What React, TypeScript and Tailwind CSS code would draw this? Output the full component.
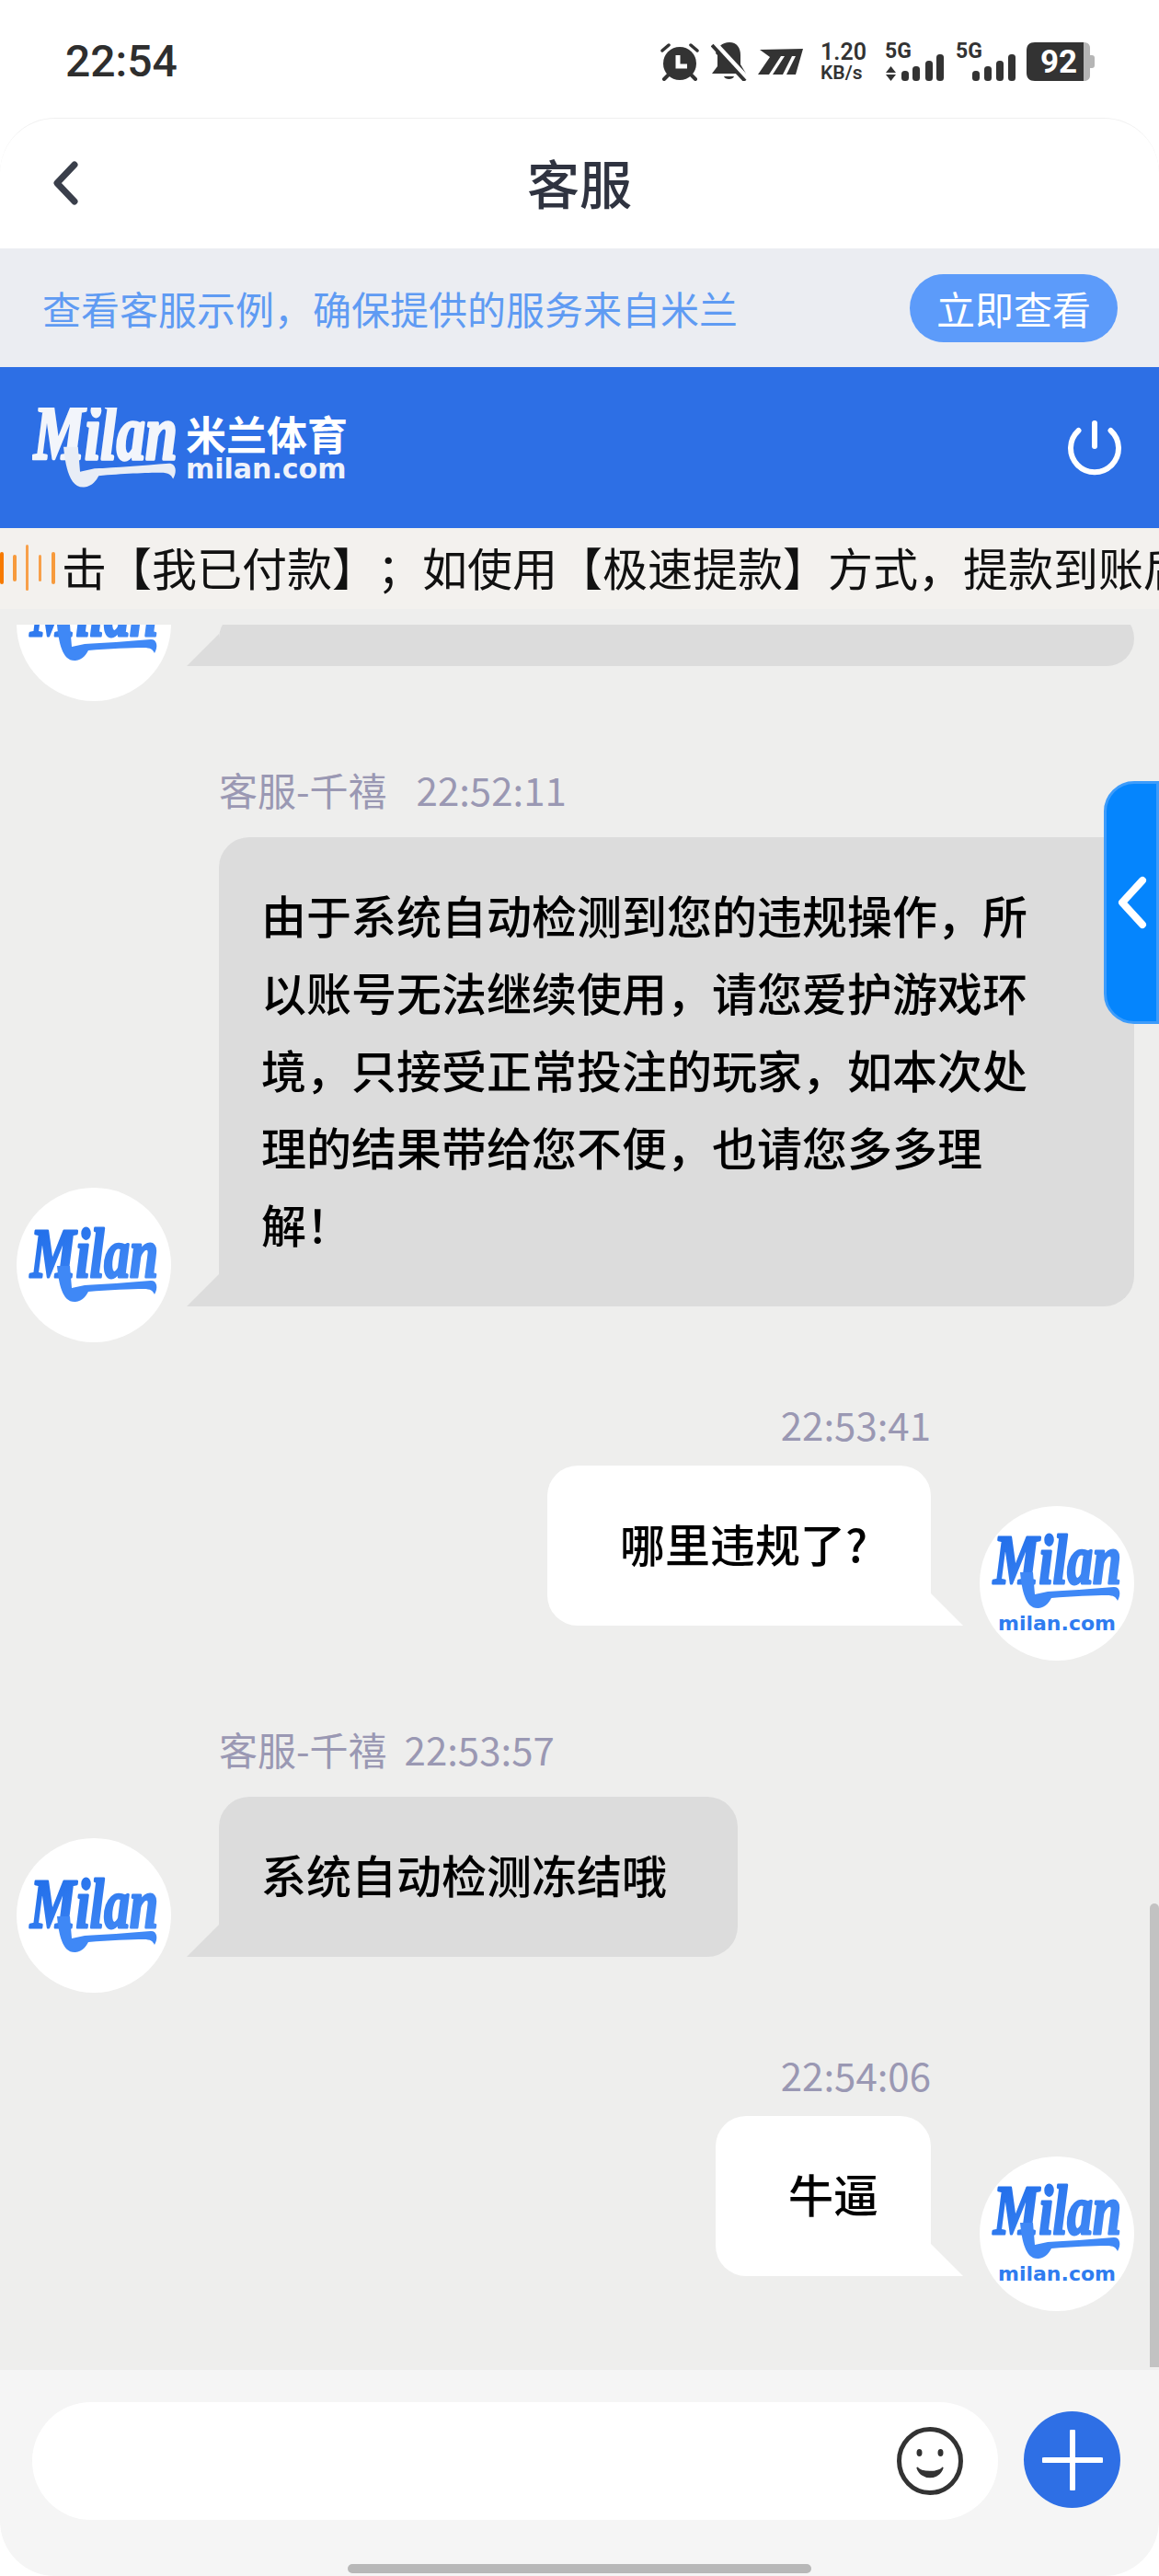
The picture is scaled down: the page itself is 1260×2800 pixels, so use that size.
const ink = '#333333';

function AlarmIcon() {
  return (
    <svg width="42" height="42" viewBox="0 0 42 42">
      <path d="M2 9 L9 3 M33 3 L40 9" stroke={ink} strokeWidth="3.5" strokeLinecap="round" />
      <path d="M9 35 L4 40 M33 35 L38 40" stroke={ink} strokeWidth="4" strokeLinecap="round" />
      <circle cx="21" cy="23" r="18" fill={ink} />
      <path d="M19 14 V26 H29" fill="none" stroke="#fff" strokeWidth="5" />
    </svg>
  );
}

function BellOffIcon() {
  return (
    <svg width="39" height="42" viewBox="0 0 39 42">
      <path d="M5 12 C7 5 12 0 20 0 C28 0 32 6 32 14 V24 L38 34 H1 L7 26 V14 Z" fill={ink} />
      <path d="M14 37 H25 C24 41 15 41 14 37 Z" fill={ink} />
      <path d="M3 1 L39 40" stroke="#fff" strokeWidth="7" />
      <path d="M1 3 L37 42" stroke={ink} strokeWidth="4" />
    </svg>
  );
}

function MiuiIcon() {
  return (
    <svg width="49" height="28" viewBox="0 0 49 28">
      <path d="M2 1 L49 0 L41 28 H0 L13 9 Z" fill={ink} />
      <path d="M25 8 L12 28 H16 L29 8 Z M37 8 L27 28 H31 L41 8 Z" fill="#fff" />
    </svg>
  );
}

function Signal({ arrows }: { arrows?: boolean }) {
  const bars = arrows
    ? [
        { x: 18, y: 31 },
        { x: 30, y: 26 },
        { x: 44, y: 20 },
        { x: 56, y: 13 },
      ]
    : [
        { x: 18, y: 31 },
        { x: 31, y: 26 },
        { x: 44, y: 20 },
        { x: 57, y: 13 },
      ];

  return (
    <svg width="65" height="42" viewBox="0 0 65 42">
      <text x="0" y="17" fontFamily="Roboto" fontWeight="700" fontSize="23" fill={ink}>
        5G
      </text>
      {arrows && <path d="M6.5 26 L12 33 H1 Z M6.5 42 L12 35 H1 Z" fill={ink} />}
      {bars.map((bar) => (
        <rect key={bar.x} x={bar.x} y={bar.y} width="8" height={42 - bar.y} rx="3.5" fill={ink} />
      ))}
    </svg>
  );
}

function Battery() {
  return (
    <svg width="74" height="42" viewBox="0 0 74 42">
      <path d="M62 0 H60 V42 H62 C66 42 69 40 69 36 V6 C69 2 66 0 62 0 Z" fill="#b5b5b5" />
      <path d="M69 14 H71 C73 14 74 15 74 17 V25 C74 27 73 28 71 28 H69 Z" fill="#b5b5b5" />
      <path d="M9 0 H62 V42 H9 C3 42 0 39 0 33 V9 C0 3 3 0 9 0 Z" fill={ink} />
      <text x="35" y="33" textAnchor="middle" fontFamily="Roboto" fontWeight="700" fontSize="35" fill="#fff">
        92
      </text>
    </svg>
  );
}

function StatusBar() {
  return (
    <div className="flex h-[128px] shrink-0 items-start justify-between bg-white pl-[71px] pr-[70px] pt-[46px]">
      <div className="h-[42px] font-['Roboto',sans-serif] text-[48px] font-medium leading-[42px] text-[#2e2e2e]">
        22:54
      </div>
      <div className="flex h-[42px] items-center">
        <AlarmIcon />
        <div className="ml-[13px] flex">
          <BellOffIcon />
        </div>
        <div className="ml-[12px] flex">
          <MiuiIcon />
        </div>
        <div className="ml-[19px] flex w-[51px] flex-col font-['Roboto',sans-serif] font-semibold text-[#333333]">
          <span className="text-[25px] leading-[24px]">1.20</span>
          <span className="text-[21px] leading-[21px]">KB/s</span>
        </div>
        <div className="ml-[19px] flex">
          <Signal arrows />
        </div>
        <div className="ml-[12px] flex">
          <Signal />
        </div>
        <div className="ml-[12px] flex">
          <Battery />
        </div>
      </div>
    </div>
  );
}

function Header() {
  return (
    <div className="relative flex h-[142px] shrink-0 items-center justify-center rounded-t-[60px] border-t border-[#f0f0f0] bg-white">
      <svg className="absolute left-[54px] top-[45px]" width="34" height="50" viewBox="0 0 34 50">
        <path d="M27 5 L8 25 L27 45" fill="none" stroke="#3a3f4b" strokeWidth="7" strokeLinecap="round" strokeLinejoin="round" />
      </svg>
      <span className="-mt-[4px] text-[57px] font-medium leading-none text-[#2f3340]">客服</span>
    </div>
  );
}

function Notice() {
  return (
    <div className="flex h-[129px] shrink-0 items-center justify-between bg-[#ebedf2] pl-[46px] pr-[45px]">
      <span className="text-[42px] leading-none text-[#5f9bf3]">查看客服示例，确保提供的服务来自米兰</span>
      <button className="h-[74px] w-[226px] rounded-full bg-[#5c9bfa] text-[42px] leading-none text-white">
        立即查看
      </button>
    </div>
  );
}

// script wordmark in a 168 wide box, y is the baseline
function MilanMark({ y, fill, swash }: { y: number; fill: string; swash: string }) {
  return (
    <>
      <text
        x="15"
        y={y}
        textLength="139"
        lengthAdjust="spacingAndGlyphs"
        fontFamily="Liberation Serif"
        fontStyle="italic"
        fontWeight="700"
        fontSize="76"
        fill={fill}
        stroke={fill}
        strokeWidth="3"
        strokeLinejoin="round"
      >
        Milan
      </text>
      <path
        d={`M44 ${y - 12} C46 ${y + 8} 50 ${y + 28} 64 ${y + 27} C72 ${y + 26} 76 ${y + 20} 78 ${y + 16} C100 ${y + 14} 125 ${y + 13} 138 ${y + 13} C146 ${y + 13} 148 ${y + 15} 150 ${y + 19} C154 ${y + 12} 153 ${y + 4} 146 ${y + 4} C120 ${y + 6} 95 ${y + 8} 74 ${y + 9} L60 ${y + 12} L58 ${y - 12} Z`}
        fill={swash}
      />
    </>
  );
}

function Banner() {
  return (
    <div className="flex h-[175px] shrink-0 items-center justify-between bg-[#2d6fe5] pl-[35px] pr-[39px]">
      <div className="flex items-center">
        <svg className="mt-[12px]" width="158" height="100" viewBox="14 36 140 89">
          <MilanMark y={86} fill="#f2f5fb" swash="#e8edf6" />
        </svg>
        <div className="ml-[9px] flex w-[176px] flex-col items-stretch font-bold text-white">
          <span className="whitespace-nowrap text-[44px] leading-[47px]">米兰体育</span>
          <span className="font-['DejaVu_Sans',sans-serif] text-[30px] leading-[30px] text-[#eef2fb]">milan.com</span>
        </div>
      </div>
      <svg className="mt-[5px]" width="62" height="64" viewBox="0 0 62 64">
        <path d="M13.5 11 A26 26 0 1 0 48.5 11" fill="none" stroke="#fff" strokeWidth="6" strokeLinecap="round" />
        <path d="M31 3 V28" stroke="#fff" strokeWidth="6" strokeLinecap="round" />
      </svg>
    </div>
  );
}

function Marquee() {
  const bars = [
    { size: 'w-[4px] h-[35px] bg-[#f77a00]', gap: '' },
    { size: 'w-[4px] h-[29px] bg-[#f79a3c]', gap: 'ml-[10px]' },
    { size: 'w-[3px] h-[50px] bg-[#f8a04a]', gap: 'ml-[10px]' },
    { size: 'w-[3px] h-[29px] bg-[#f8a04a]', gap: 'ml-[11px]' },
    { size: 'w-[4px] h-[35px] bg-[#f79a3c]', gap: 'ml-[11px]' },
  ];

  return (
    <div className="flex h-[88px] shrink-0 items-center overflow-hidden bg-[#f3f1ee]">
      <div className="flex w-[67px] shrink-0 items-center pb-[2px]">
        {bars.map((bar, index) => (
          <div key={index} className={`rounded-full ${bar.size} ${bar.gap}`} />
        ))}
      </div>
      <div className="-mt-[6px] whitespace-nowrap text-[49px] leading-none text-[#111111]">
        击【我已付款】；如使用【极速提款】方式，提款到账后
      </div>
    </div>
  );
}

function Avatar({ domain }: { domain?: boolean }) {
  const gradient = domain ? 'milanA' : 'milanB';

  return (
    <div className="h-[168px] w-[168px] shrink-0 rounded-full bg-white">
      <svg width="168" height="168" viewBox="0 0 168 168">
        <defs>
          <linearGradient id={gradient} x1="0" y1="0" x2="1" y2="1">
            <stop offset="0" stopColor="#1c6ae8" />
            <stop offset="1" stopColor="#4a90f8" />
          </linearGradient>
        </defs>
        <MilanMark y={domain ? 84 : 97} fill={`url(#${gradient})`} swash="#3f88f6" />
        {domain && (
          <text x="84" y="135" textAnchor="middle" fontFamily="DejaVu Sans" fontWeight="700" fontSize="22" fill="#2f7cf0">
            milan.com
          </text>
        )}
      </svg>
    </div>
  );
}

function Tail({ side, color }: { side: 'left' | 'right'; color: string }) {
  return side === 'left' ? (
    <div className={`absolute bottom-0 left-[-35px] h-[35px] w-[35px] [clip-path:polygon(100%_0,100%_100%,0_100%)] ${color}`} />
  ) : (
    <div className={`absolute bottom-0 right-[-35px] h-[35px] w-[35px] [clip-path:polygon(0_0,100%_100%,0_100%)] ${color}`} />
  );
}

interface IncomingProps {
  label: string;
  time: string;
  lines: string[];
  gapClass: string;
  widthClass: string;
  timeClass: string;
}

function IncomingMessage({ label, time, lines, gapClass, widthClass, timeClass }: IncomingProps) {
  return (
    <div className={`flex items-end pl-[18px] ${gapClass}`}>
      <Avatar />
      <div className="ml-[52px] flex flex-col items-start pb-[39px]">
        <div className="mb-[19px] flex h-[60px] items-center whitespace-pre pb-[6px] text-[42px] leading-none text-[#9a98b3]">
          <span>{label}</span>
          <span className={timeClass}>{time}</span>
        </div>
        <div className={`relative rounded-[33px] rounded-bl-none bg-[#dcdcdc] pb-[48px] pl-[46px] pt-[42px] text-[49px] font-medium leading-[84px] text-black ${widthClass}`}>
          {lines.map((line) => (
            <div key={line} className="whitespace-nowrap">
              {line}
            </div>
          ))}
          <Tail side="left" color="bg-[#dcdcdc]" />
        </div>
      </div>
    </div>
  );
}

function OutgoingMessage({ time, text, gapClass, widthClass }: { time: string; text: string; gapClass: string; widthClass: string }) {
  return (
    <div className={`flex items-end justify-end pr-[27px] ${gapClass}`}>
      <div className="mr-[53px] flex flex-col items-end pb-[38px]">
        <div className="mb-[12px] flex h-[60px] items-center pb-[6px] text-[42px] leading-none text-[#9a98b3]">{time}</div>
        <div className={`relative rounded-[33px] rounded-br-none bg-white pb-[48px] pl-[79px] pt-[42px] text-[49px] font-medium leading-[84px] text-black ${widthClass}`}>
          {text}
          <Tail side="right" color="bg-white" />
        </div>
      </div>
      <Avatar domain />
    </div>
  );
}

function Chat() {
  return (
    <div className="relative flex min-h-0 flex-1 flex-col bg-[#eeeeed] pt-[17px]">
      <div className="flex min-h-0 flex-1 flex-col overflow-hidden">
        <div className="-mt-[85px] flex items-end pl-[18px]">
          <Avatar />
          <div className="relative mb-[38px] ml-[52px] h-[60px] w-[995px] rounded-[33px] rounded-bl-none bg-[#dcdcdc]">
            <Tail side="left" color="bg-[#dcdcdc]" />
          </div>
        </div>
        <IncomingMessage
          label="客服-千禧"
          time="22:52:11"
          timeClass="ml-[32px]"
          gapClass="mt-[69px]"
          widthClass="w-[995px]"
          lines={[
            '由于系统自动检测到您的违规操作，所',
            '以账号无法继续使用，请您爱护游戏环',
            '境，只接受正常投注的玩家，如本次处',
            '理的结果带给您不便，也请您多多理',
            '解！',
          ]}
        />
        <OutgoingMessage time="22:53:41" text="哪里违规了?" gapClass="mt-[62px]" widthClass="w-[417px]" />
        <IncomingMessage
          label="客服-千禧"
          time="22:53:57"
          timeClass="ml-[19px]"
          gapClass="mt-[69px]"
          widthClass="w-[564px]"
          lines={['系统自动检测冻结哦']}
        />
        <OutgoingMessage time="22:54:06" text="牛逼" gapClass="mt-[62px]" widthClass="w-[234px]" />
      </div>

      <div className="absolute right-0 top-[187px] h-[264px] w-[60px] rounded-l-[33px] border-[3px] border-[#3d9cfb] bg-[#0585fd]">
        <svg className="absolute left-[8px] top-[99px]" width="40" height="60" viewBox="0 0 40 60">
          <path d="M31 6 L9 30 L31 54" fill="none" stroke="#fff" strokeWidth="8" strokeLinecap="round" strokeLinejoin="round" />
        </svg>
      </div>
      <div className="absolute bottom-[3px] right-0 h-[504px] w-[10px] rounded-t-full bg-[#c2c2c2]" />
    </div>
  );
}

function InputBar() {
  return (
    <div className="relative h-[224px] shrink-0 rounded-b-[60px] bg-[#f5f5f5]">
      <div className="flex items-start pl-[35px] pt-[35px]">
        <div className="flex h-[128px] w-[1050px] items-center justify-end rounded-full bg-white pr-[38px]">
          <svg width="72" height="74" viewBox="0 0 72 74">
            <ellipse cx="36" cy="37" rx="33.5" ry="34.5" fill="none" stroke="#333333" strokeWidth="5" />
            <ellipse cx="24.5" cy="28" rx="3" ry="4" fill="#333333" />
            <ellipse cx="47.5" cy="28" rx="3" ry="4" fill="#333333" />
            <path d="M22 44 C26 58 46 58 50 44 C46 50 26 50 22 44 Z" fill="#333333" stroke="#333333" strokeWidth="1.5" />
          </svg>
        </div>
        <div className="ml-[28px] mt-[10px] flex h-[105px] w-[105px] items-center justify-center rounded-full bg-[#2e6fe5]">
          <svg width="66" height="66" viewBox="0 0 66 66">
            <path d="M33 2 V64 M2 33 H64" stroke="#fff" strokeWidth="6" strokeLinecap="round" />
          </svg>
        </div>
      </div>
      <div className="absolute bottom-[3px] left-[378px] h-[10px] w-[504px] rounded-full bg-[#b8b8b8]" />
    </div>
  );
}

export default function App() {
  return (
    <div className="flex h-[2800px] w-[1260px] flex-col overflow-hidden bg-white font-['Noto_Sans_CJK_SC',sans-serif] [text-spacing-trim:space-all]">
      <StatusBar />
      <Header />
      <Notice />
      <Banner />
      <Marquee />
      <Chat />
      <InputBar />
    </div>
  );
}
